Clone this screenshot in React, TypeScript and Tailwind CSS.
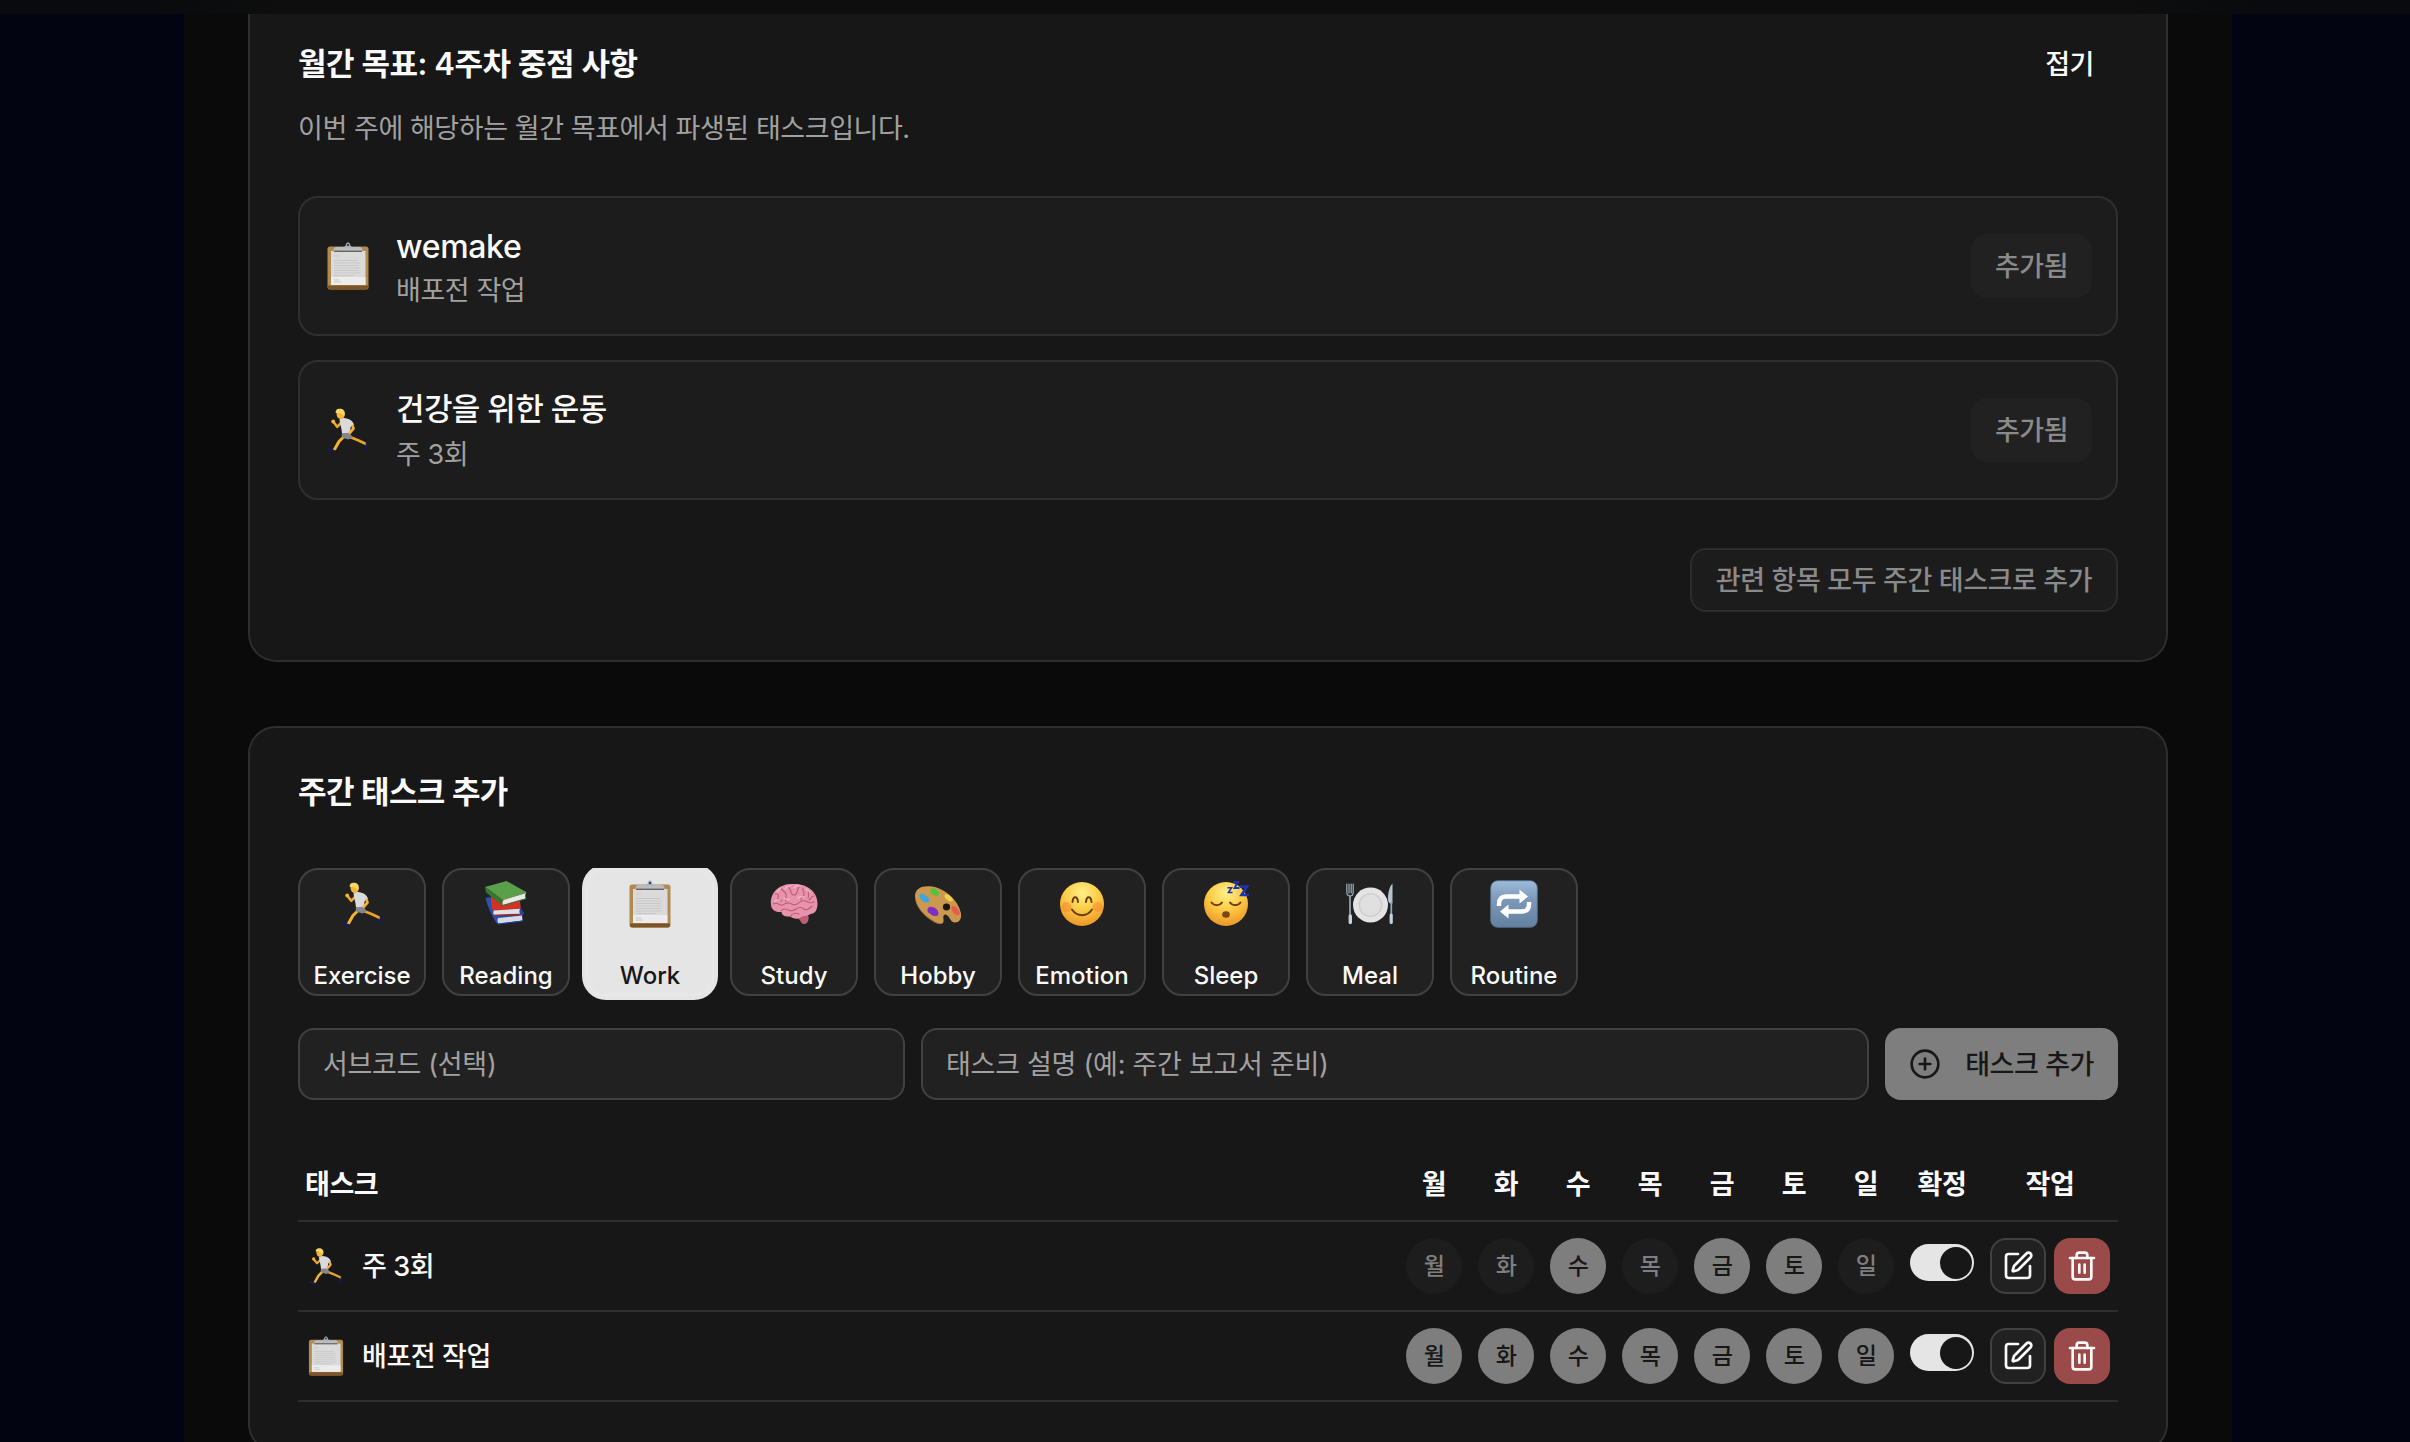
import type { ReactNode } from 'react';
import { CirclePlus, SquarePen, Trash2 } from 'lucide-react';

type IconProps = { className: string };

function RunnerIcon({ className }: IconProps) {
  return (
    <svg viewBox="0 0 48 48" className={className} fill="none" strokeLinecap="round" strokeLinejoin="round">
      <path d="M17 17l-3.800 3.800-3.700-4.800" stroke="#eda92a" strokeWidth="2.600" />
      <circle cx="9.200" cy="15.500" r="1.900" fill="#f5b731" />
      <path d="M26 31l7.500 3 8 3.800" stroke="#e9a32a" strokeWidth="2.700" />
      <path d="M20.500 30l-5.500 5.500-4.500 8" stroke="#f3b32c" strokeWidth="3" />
      <path d="M42.800 37c.3 2.800-.6 4.500-2 6.500" stroke="#131c5c" strokeWidth="2" />
      <path d="M4.500 43.200l6.500 2" stroke="#131c5c" strokeWidth="2.200" />
      <path d="M15.500 13.500c2.500-1.800 5-1.700 8-.8 3 .8 5.500 2.800 6.500 6l-3.200 2-1.300 6.800-7.500.3c-.2-5-1.500-8-2.500-14.300z" fill="#dadade" />
      <path d="M18 27.300l7.500-.5 3.300 4.700-4.300 2-6-1.800-.8-2.200z" fill="#85868b" />
      <path d="M28.600 20l.9 2.500-3.700 4.300" stroke="#f3b32c" strokeWidth="2.700" />
      <path d="M12.500 6.500c0 4 1 6 3.500 6.500s5-2 5-5.500z" fill="#f4b736" />
      <path d="M11.800 7c-.6-2.800 1.200-4.300 4-4.300 3.200 0 5.400 2 5 5-.3 1.500-1.200 2-1.800 1.500-1.500-2-4-2.500-7.200-2.200z" fill="#f5d768" />
    </svg>
  );
}

function BooksIcon({ className }: IconProps) {
  return (
    <svg viewBox="0 0 48 48" className={className}>
      <path d="M3.500 18l12 22 25-4 1.500-3-6-9z" fill="#2447a3" />
      <path d="M3.500 18l4.500-1 10 19-3 8c-5-8-9-16-11.500-26z" fill="#2b50b5" />
      <path d="M16 38l24-2.500.5 5L16.500 44c-1.200-2-1.200-4-.5-6z" fill="#d5dce6" />
      <path d="M15 44.200l26-3.200" stroke="#1f3f99" strokeWidth="1.200" />
      <path d="M9 14l29 6 .8 8.500L11 31c-2-5-2.500-11-2-17z" fill="#d23226" />
      <path d="M12 30.500l26-1.700c-.8 2-.8 3.500 0 5.200l-26 1c-1-1.500-1-3 0-4.500z" fill="#dfe2e5" />
      <path d="M11.500 35.300l27.500-1" stroke="#b3251d" strokeWidth="1.300" />
      <path d="M3 7l21.500-6L45 12.500 21 20z" fill="#5a9f4a" />
      <path d="M3 7l1 5.500L20.500 25.500 21 20z" fill="#35772f" />
      <path d="M21.500 20L44 13c-1 2-1 4-.2 5.500L21 25c-.9-1.500-.5-3.500.5-5z" fill="#e6e9e6" />
      <path d="M20.500 25.600L44.500 18.600" stroke="#2f7330" strokeWidth="1" />
    </svg>
  );
}

function ClipboardIcon({ className }: IconProps) {
  return (
    <svg viewBox="0 0 48 48" className={className}>
      <rect x="3.500" y="4.500" width="41" height="43" rx="2.500" fill="#b08a4e" />
      <path d="M4 43.500h40v1.700a2.300 2.300 0 0 1-2.300 2.300H6.300A2.300 2.300 0 0 1 4 45.200z" fill="#7d5527" />
      <rect x="7" y="9" width="34.500" height="34" fill="#dadada" />
      <rect x="7" y="35" width="34.500" height="8" fill="#f3f3f3" opacity=".7" />
      <path d="M10 14h5M10 18.500h24M10 21h26M10 23.500h25M10 26h26M10 28.500h25M10 31h26M10 33.500h20M10 38h5M10 40h7" stroke="#c9c9c9" strokeWidth="1" />
      <path d="M9.500 9.500c0-3.500 1-4.500 3.500-4.500h22c2.500 0 3.500 1 3.500 4.500z" fill="#b9bcc3" />
      <path d="M10 9.300h28" stroke="#6d6258" strokeWidth="1.400" />
      <path d="M18 5.500c2.800-.5 3.500-1.500 3.800-2.800C22.200 1.200 23 .6 24 .6s1.800.6 2.200 2.100c.3 1.300 1 2.300 3.800 2.800z" fill="#a9b3c2" />
      <circle cx="24" cy="3" r="1.200" fill="#3a3f48" />
    </svg>
  );
}

function BrainIcon({ className }: IconProps) {
  return (
    <svg viewBox="0 0 48 48" className={className} fill="none" strokeLinecap="round">
      <path d="M25 35c2-2 11-2.500 13 0 1.500 3 .5 8-3 9-3.500.5-4-2.500-6-5z" fill="#bf5f74" />
      <path d="M1 25C-.5 13 9 3.500 23 4c13-.5 24.500 7 24.500 19.500 0 7-3 10.500-7 10.500-3.500 2.500-7 1.500-9 3-4 3.500-9 1-11.500-.5-4 .5-8.500-1-8.500-4.500C7 32.500 1.500 30.500 1 25z" fill="#e793ab" />
      <g stroke="#bd5c78" strokeWidth="1.100">
        <path d="M5 14c3-1 4 1 3 4s2 4 4 2M11 8c1 3 4 3 5 6s-2 5 0 7M19 5c-2 3 2 4 2 7s3 4 5 2 1-5 3-7" />
        <path d="M3 24c3-2 5 0 8 1s4-3 8-2 4 3 8 1 4-4 8-3 4 3 9 1" />
        <path d="M11 31c2-3 5-2 7-1s6 1 8-1 6-2 8 0 5 0 8-3M21 36c1-3 5-3 8-2M33 8c-1 3 2 4 1 7s-4 3-3 5M39 11c-2 2 1 4-1 7M44 16c-3 0-3 3-5 4" />
      </g>
      <g stroke="#f8c3d1" strokeWidth="1.300" opacity=".8">
        <path d="M7 12c1-2 2-3 4-4M15 9c2-3 4-3 5-3M24 8c1-2 4-3 6-2M36 9c2 1 3 2 4 3M5 21c1-1 3-1 5 0M14 18c1 1 3 2 5 1M28 18c2-2 4-1 6-1" />
      </g>
    </svg>
  );
}

function PaletteIcon({ className }: IconProps) {
  return (
    <svg viewBox="0 0 48 48" className={className}>
      <path d="M1 16C1 8 9 5 18 6.500c14 2 27 15 29 27 .7 6-2 9-6 9-5 0-5-7-9.500-8-3.500 0-1.500 4-2 7-.6 3-4 3-7 1.800C11.500 38 1 27 1 16z" fill="#cc9850" />
      <path d="M1 16c1 12 12 22.500 23 27 2.500 1 5 .5 5.500-1.500-.6 3-4 3-7 1.800C11.500 38 1 27 1 16z" fill="#8f5e27" />
      <ellipse cx="32.500" cy="27" rx="3.600" ry="3.400" fill="#1d1712" />
      <path d="M6 14c2-1.500 4 .5 6 1.500s4.500 4 3 6-4.500 1-6.500-.5S5 16 6 14z" fill="#3fa6dc" />
      <path d="M17 9c1.500-2 4-.5 5.500.5s3.500 3.500 2 5.500-4.500.5-6.500-.7S15.800 11 17 9z" fill="#55c13d" />
      <path d="M31 14.500c2-1 4 .5 5.500 2s3.500 3.500 2 4.500-4 0-5.500-1.200-3.500-4-2-5.300z" fill="#f2cf4c" />
      <path d="M38 26.500c2-.7 4.500.5 6 3s2.500 5 .7 5.500-4.200-.7-5.400-2.500-3-5-1.300-6z" fill="#ea5a4b" />
      <path d="M14 28c2-2 4-1 6-.5s5 4 4.500 6.500-4 2.500-6 1.500-2-2-3.500-2.500-2-4-1-5z" fill="#7d2fc4" />
    </svg>
  );
}

function FaceBase({ id }: { id: string }) {
  return (
    <>
      <defs>
        <radialGradient id={id} cx=".5" cy=".25" r=".78">
          <stop offset="0" stopColor="#fff08a" />
          <stop offset=".5" stopColor="#fccb45" />
          <stop offset="1" stopColor="#ec9226" />
        </radialGradient>
      </defs>
      <circle cx="24" cy="24" r="22" fill={`url(#${id})`} />
    </>
  );
}

function SmileIcon({ className }: IconProps) {
  return (
    <svg viewBox="0 0 48 48" className={className} fill="none" strokeLinecap="round">
      <FaceBase id="smile-face" />
      <circle cx="8.500" cy="27" r="5" fill="#f4742b" opacity=".4" />
      <circle cx="39.500" cy="27" r="5" fill="#f4742b" opacity=".4" />
      <path d="M14.500 22c.5-6.500 5-6.500 5.500 0M28 22c.5-6.500 5-6.500 5.500 0" stroke="#6a3e12" strokeWidth="2" />
      <path d="M14 29.500c5 7.500 15 7.500 20 0" stroke="#6a3e12" strokeWidth="2" />
    </svg>
  );
}

function SleepIcon({ className }: IconProps) {
  return (
    <svg viewBox="0 0 48 48" className={className} fill="none" strokeLinecap="round" strokeLinejoin="round">
      <FaceBase id="sleep-face" />
      <path d="M9.500 22.500c2.500 3.500 8 3.500 10.500 0M28 22.500c2.500 3.500 8 3.500 10.500 0" stroke="#6a3e12" strokeWidth="2" />
      <ellipse cx="24" cy="34.500" rx="3.800" ry="3.300" fill="#7a4716" />
      <g stroke="#1e33b5" strokeLinecap="butt" strokeLinejoin="miter">
        <path d="M25.500 7.800h4l-3 4.700h4" strokeWidth="1.600" />
        <path d="M31.500 2h4.500l-3.500 6h5" strokeWidth="1.900" />
        <path d="M38 6.500h7l-5.500 8.500h7.500" strokeWidth="2.600" />
      </g>
    </svg>
  );
}

function MealIcon({ className }: IconProps) {
  return (
    <svg viewBox="0 0 48 48" className={className} fill="none" strokeLinecap="round">
      <circle cx="24.500" cy="25" r="17.500" fill="#e4e4e4" />
      <circle cx="24.500" cy="25" r="12" fill="#cfcfcf" />
      <circle cx="24.500" cy="25" r="10.500" fill="#e0e0e0" />
      <path d="M.8 4v8c0 3 1 4 3.200 4s3.200-1 3.200-4V4M3 4v9M5.200 4v9" stroke="#9fb0bf" strokeWidth="1.200" />
      <path d="M4 16v20" stroke="#9aa9b6" strokeWidth="1.700" />
      <path d="M4.300 36v6.500" stroke="#c3d2de" strokeWidth="3.400" />
      <path d="M46.500 3.500c-3 3-4.500 9-4.500 15 0 2.500.5 4 2 5h2.500z" fill="#b4c3cf" />
      <path d="M45.300 22v14" stroke="#9aa9b6" strokeWidth="1.700" />
      <path d="M45.200 35v7.500" stroke="#c3d2de" strokeWidth="3.200" />
    </svg>
  );
}

function RepeatIcon({ className }: IconProps) {
  return (
    <svg viewBox="0 0 48 48" className={className}>
      <defs>
        <linearGradient id="repeat-tile" x1="0" y1="0" x2="0" y2="1">
          <stop offset="0" stopColor="#9dbbdb" />
          <stop offset=".4" stopColor="#7d99b9" />
          <stop offset="1" stopColor="#64809f" />
        </linearGradient>
      </defs>
      <rect x=".7" y=".7" width="46.600" height="46.600" rx="7" fill="url(#repeat-tile)" stroke="#577291" strokeWidth=".8" />
      <path d="M9 26v-2c0-5 2.500-7.500 7-7.500H31M39 22v2c0 5-2.500 7.500-7 7.500H17" fill="none" stroke="#fff" strokeWidth="4.400" />
      <path d="M29.500 9.500l8.500 7-8.500 7zM18.500 24.500l-8.500 7 8.500 7z" fill="#fff" />
    </svg>
  );
}

const categories = [
  { label: 'Exercise', Icon: RunnerIcon },
  { label: 'Reading', Icon: BooksIcon },
  { label: 'Work', Icon: ClipboardIcon, active: true },
  { label: 'Study', Icon: BrainIcon },
  { label: 'Hobby', Icon: PaletteIcon },
  { label: 'Emotion', Icon: SmileIcon },
  { label: 'Sleep', Icon: SleepIcon },
  { label: 'Meal', Icon: MealIcon },
  { label: 'Routine', Icon: RepeatIcon },
];

const days = ['월', '화', '수', '목', '금', '토', '일'];

const goals = [
  { title: 'wemake', detail: '배포전 작업', Icon: ClipboardIcon, titleClass: 'text-[32px] tracking-[-0.01em] pt-0.5' },
  { title: '건강을 위한 운동', detail: '주 3회', Icon: RunnerIcon, titleClass: 'text-[31px] tracking-[-0.02em]' },
];

const tasks = [
  { name: '주 3회', Icon: RunnerIcon, on: [false, false, true, false, true, true, false] },
  { name: '배포전 작업', Icon: ClipboardIcon, on: [true, true, true, true, true, true, true] },
];

const columns = 'grid grid-cols-[1fr_repeat(7,72px)_80px_136px] items-center';

function GoalRow({ children, Icon }: { children: ReactNode; Icon: (p: IconProps) => ReactNode }) {
  return (
    <li className="flex h-[140px] items-center rounded-[20px] border-2 border-[#2f2f2f] bg-[#1c1c1c] px-6">
      <Icon className="size-12 shrink-0" />
      <div className="ml-6 flex-1">{children}</div>
      <button className="h-16 w-[121px] rounded-2xl bg-[#212121] pt-0.5 font-medium text-[#8a8a8a]">추가됨</button>
    </li>
  );
}

export default function App() {
  return (
    <div className="flex h-[1442px] w-[2410px] flex-col overflow-hidden bg-[#020511] font-['Inter','Noto_Sans_CJK_KR',sans-serif] text-[27px] tracking-[-0.016em] text-[#fafafa]">
      <header className="h-[14px] shrink-0 bg-linear-to-r from-[#080a0d] from-6% via-[#0e0e0e] via-12% to-[#0e0e0e]">
        <div className="h-full bg-linear-to-r from-transparent from-88% to-[#080a0d] to-94%" />
      </header>
      <main className="ml-[184px] w-[2048px] flex-1 bg-[#0a0a0a] px-16">
        <section className="h-[648px] rounded-b-[28px] border-2 border-t-0 border-[#2e2e2e] bg-[#171717] px-12 pt-[17px]">
          <div className="flex h-16 items-center justify-between pt-0.5">
            <h2 className="text-[31px] font-semibold tracking-[-0.015em]">월간 목표: 4주차 중점 사항</h2>
            <button className="h-16 px-6 pt-0.5 font-medium">접기</button>
          </div>
          <p className="mt-3.5 h-10 leading-10 text-[#a1a1a1]">이번 주에 해당하는 월간 목표에서 파생된 태스크입니다.</p>
          <ul className="mt-[47px] flex flex-col gap-6">
            {goals.map(({ title, detail, Icon, titleClass }) => (
              <GoalRow key={title} Icon={Icon}>
                <h3 className={`${titleClass} h-12 leading-[48px] font-medium`}>{title}</h3>
                <p className="pt-0.5 leading-10 text-[#a1a1a1]">{detail}</p>
              </GoalRow>
            ))}
          </ul>
          <div className="mt-12 flex justify-end">
            <button className="h-16 w-[428px] rounded-2xl border-2 border-[#2c2c2c] bg-[#1c1c1c] pt-0.5 font-medium tracking-[-0.014em] whitespace-nowrap text-[#8a8a8a]">
              관련 항목 모두 주간 태스크로 추가
            </button>
          </div>
        </section>

        <section className="mt-16 h-[726px] rounded-[28px] border-2 border-[#2e2e2e] bg-[#171717] px-12 pt-12">
          <h2 className="h-[30px] text-[31px] leading-[31px] font-semibold tracking-[-0.02em]">주간 태스크 추가</h2>

          <div className="mt-[62px] flex h-40 gap-4 overflow-hidden">
            {categories.map(({ label, Icon, active }) => (
              <button
                key={label}
                className={`flex size-32 shrink-0 flex-col items-center rounded-[20px] border-2 pt-2.5 text-2xl font-medium tracking-normal ${
                  active
                    ? 'border-[#e8e8e8] bg-[#e5e5e5] text-[#171717] ring-4 ring-[#e5e5e5]'
                    : 'border-[#414141] bg-[#212121]'
                }`}
              >
                <Icon className="size-12" />
                <span className="mt-8 leading-8">{label}</span>
              </button>
            ))}
          </div>

          <div className="flex h-[72px] gap-4">
            <div className="flex w-[607px] items-center rounded-2xl border-2 border-[#414141] bg-[#212121] px-[23px] pt-0.5 tracking-[-0.012em] text-[#a1a1a1]">
              서브코드 (선택)
            </div>
            <div className="flex flex-1 items-center rounded-2xl border-2 border-[#414141] bg-[#212121] px-[23px] pt-0.5 tracking-[-0.01em] text-[#a1a1a1]">
              태스크 설명 (예: 주간 보고서 준비)
            </div>
            <button className="flex w-[233px] items-center justify-between rounded-2xl bg-[#7e7e7e] px-6 font-medium text-[#171717]">
              <CirclePlus className="size-8" />
              <span className="pt-0.5">태스크 추가</span>
            </button>
          </div>

          <div className="mt-12">
            <div className={`${columns} h-[74px] border-b-2 border-[#2e2e2e] pt-[3px] text-center font-bold`}>
              <span className="pl-[7px] text-left">태스크</span>
              {days.map((d) => (
                <span key={d}>{d}</span>
              ))}
              <span>확정</span>
              <span>작업</span>
            </div>
            {tasks.map(({ name, Icon, on }) => (
              <div key={name} className={`${columns} h-[90px] justify-items-center border-b-2 border-[#2e2e2e]`}>
                <div className="flex items-center gap-4 justify-self-start pl-2 font-medium">
                  <Icon className="size-10" />
                  <span className="pt-0.5">{name}</span>
                </div>
                {days.map((d, i) => (
                  <span
                    key={d}
                    className={`flex size-14 items-center justify-center rounded-full text-[23px] font-medium ${
                      on[i] ? 'bg-[#7e7e7e] text-[#171717]' : 'bg-[#1d1d1d] text-[#7f7f7f]'
                    }`}
                  >
                    {d}
                  </span>
                ))}
                <div className="mb-[7px] flex h-[37px] w-16 items-center justify-end rounded-full bg-[#e5e5e5] pr-0.5">
                  <span className="size-8 rounded-full bg-[#171717]" />
                </div>
                <div className="flex gap-2">
                  <button className="flex size-14 items-center justify-center rounded-2xl border-2 border-[#414141] bg-[#212121]">
                    <SquarePen className="size-8" />
                  </button>
                  <button className="flex size-14 items-center justify-center rounded-2xl bg-[#9b4a4a]">
                    <Trash2 className="size-8" />
                  </button>
                </div>
              </div>
            ))}
          </div>
        </section>
      </main>
    </div>
  );
}
